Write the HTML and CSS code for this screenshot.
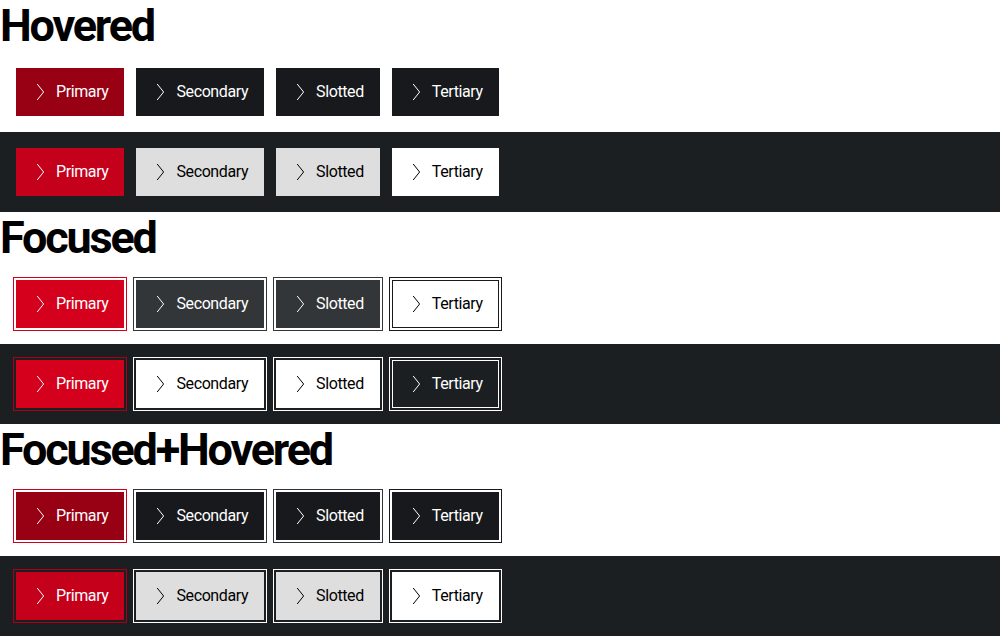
FILE: index.html
```html
<!DOCTYPE html>
<html lang="en">
<head>
<meta charset="utf-8">
<title>Buttons</title>
<link rel="stylesheet" href="styles.css">
</head>
<body>
<svg width="0" height="0" class="defs" aria-hidden="true">
  <symbol id="chev" viewBox="0 0 24 24"><path d="M9.2 4 L15.6 12 L9.2 20" fill="none" stroke="currentColor" stroke-width="1"/></symbol>
</svg>

<h2 class="title">Hovered</h2>
<div class="row light">
  <button class="btn primary hover"><svg class="icon"><use href="#chev"/></svg><span>Primary</span></button>
  <button class="btn secondary hover"><svg class="icon"><use href="#chev"/></svg><span>Secondary</span></button>
  <button class="btn secondary hover"><svg class="icon"><use href="#chev"/></svg><span>Slotted</span></button>
  <button class="btn tertiary hover"><svg class="icon"><use href="#chev"/></svg><span>Tertiary</span></button>
</div>
<div class="row dark">
  <button class="btn primary hover"><svg class="icon"><use href="#chev"/></svg><span>Primary</span></button>
  <button class="btn secondary hover"><svg class="icon"><use href="#chev"/></svg><span>Secondary</span></button>
  <button class="btn secondary hover"><svg class="icon"><use href="#chev"/></svg><span>Slotted</span></button>
  <button class="btn tertiary hover"><svg class="icon"><use href="#chev"/></svg><span>Tertiary</span></button>
</div>

<h2 class="title">Focused</h2>
<div class="row light">
  <button class="btn primary focus"><svg class="icon"><use href="#chev"/></svg><span>Primary</span></button>
  <button class="btn secondary focus"><svg class="icon"><use href="#chev"/></svg><span>Secondary</span></button>
  <button class="btn secondary focus"><svg class="icon"><use href="#chev"/></svg><span>Slotted</span></button>
  <button class="btn tertiary focus"><svg class="icon"><use href="#chev"/></svg><span>Tertiary</span></button>
</div>
<div class="row dark">
  <button class="btn primary focus"><svg class="icon"><use href="#chev"/></svg><span>Primary</span></button>
  <button class="btn secondary focus"><svg class="icon"><use href="#chev"/></svg><span>Secondary</span></button>
  <button class="btn secondary focus"><svg class="icon"><use href="#chev"/></svg><span>Slotted</span></button>
  <button class="btn tertiary focus"><svg class="icon"><use href="#chev"/></svg><span>Tertiary</span></button>
</div>

<h2 class="title">Focused+Hovered</h2>
<div class="row light">
  <button class="btn primary focus hover"><svg class="icon"><use href="#chev"/></svg><span>Primary</span></button>
  <button class="btn secondary focus hover"><svg class="icon"><use href="#chev"/></svg><span>Secondary</span></button>
  <button class="btn secondary focus hover"><svg class="icon"><use href="#chev"/></svg><span>Slotted</span></button>
  <button class="btn tertiary focus hover"><svg class="icon"><use href="#chev"/></svg><span>Tertiary</span></button>
</div>
<div class="row dark">
  <button class="btn primary focus hover"><svg class="icon"><use href="#chev"/></svg><span>Primary</span></button>
  <button class="btn secondary focus hover"><svg class="icon"><use href="#chev"/></svg><span>Secondary</span></button>
  <button class="btn secondary focus hover"><svg class="icon"><use href="#chev"/></svg><span>Slotted</span></button>
  <button class="btn tertiary focus hover"><svg class="icon"><use href="#chev"/></svg><span>Tertiary</span></button>
</div>
</body>
</html>
```

FILE: styles.css
```css
html, body {
  margin: 0;
  padding: 0;
  background: #fff;
}

body {
  font-family: Roboto, "Liberation Sans", sans-serif;
  color: #000;
}

.defs {
  position: absolute;
  width: 0;
  height: 0;
  overflow: hidden;
}

.title {
  margin: 0;
  font-size: 45px;
  line-height: 52px;
  font-weight: 700;
  letter-spacing: -2.2px;
  color: #000;
}

.row {
  display: flex;
  gap: 12px;
  padding: 16px;
  height: 48px;
}

.row.dark {
  background: #1b1f22;
}

.btn {
  display: flex;
  align-items: center;
  gap: 4px;
  height: 48px;
  margin: 0;
  padding: 0 15px 0 11px;
  border: 1px solid transparent;
  font-family: inherit;
  font-size: 16px;
  letter-spacing: -0.4px;
  line-height: 24px;
  cursor: pointer;
  box-sizing: border-box;
  outline-offset: 2px;
}

.icon {
  width: 24px;
  height: 24px;
  flex: none;
}

/* ---------- light theme ---------- */
.light .primary {
  background: #d5001c;
  border-color: #d5001c;
  color: #fff;
}
.light .primary.hover {
  background: #980014;
  border-color: #980014;
}
.light .primary.focus {
  outline: 1px solid #d5001c;
}

.light .secondary {
  background: #323639;
  border-color: #323639;
  color: #fff;
}
.light .secondary.hover {
  background: #17191c;
  border-color: #17191c;
}
.light .secondary.focus {
  outline: 1px solid #323639;
}

.light .tertiary {
  background: transparent;
  border-color: #17191c;
  color: #000;
}
.light .tertiary.hover {
  background: #17191c;
  color: #fff;
}
.light .tertiary.focus {
  outline: 1px solid #17191c;
}

/* ---------- dark theme ---------- */
.dark .primary {
  background: #d5001c;
  border-color: #d5001c;
  color: #fff;
}
.dark .primary.hover {
  background: #c4001b;
  border-color: #c4001b;
}
.dark .primary.focus {
  outline: 1px solid #a8001a;
}

.dark .secondary {
  background: #fff;
  border-color: #fff;
  color: #000;
}
.dark .secondary.hover {
  background: #dedede;
  border-color: #dedede;
}
.dark .secondary.focus {
  outline: 1px solid #fff;
}

.dark .tertiary {
  background: transparent;
  border-color: #fff;
  color: #fff;
}
.dark .tertiary.hover {
  background: #fff;
  color: #000;
}
.dark .tertiary.focus {
  outline: 1px solid #fff;
}
```
